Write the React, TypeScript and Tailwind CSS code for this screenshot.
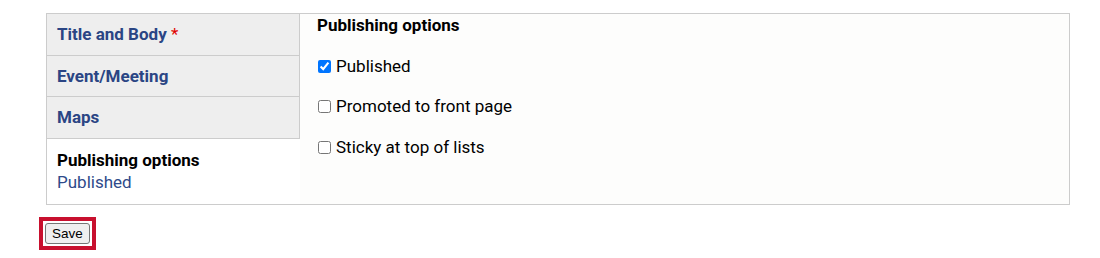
export default function App() {
  const tabs = [
    { label: "Title and Body", required: true },
    { label: "Event/Meeting" },
    { label: "Maps" },
  ];
  const options = [
    { label: "Published", checked: true },
    { label: "Promoted to front page", checked: false },
    { label: "Sticky at top of lists", checked: false },
  ];

  return (
    <div className="bg-white min-h-[258px] pt-[13px] pl-[46px] pr-[30px] font-['Roboto','Liberation_Sans',sans-serif] text-black">
      <div className="flex border border-[#cccccc] w-[1024px] h-[192px]">
        <ul className="w-[253px] shrink-0 flex flex-col">
          {tabs.map((t) => (
            <li
              key={t.label}
              className="bg-[#eeeeee] border-b border-r border-[#cccccc] px-[10px] py-[10px] h-[41.5px] flex items-center"
            >
              <a className="text-[17px] font-bold leading-[20px] text-[#2a4584]">
                {t.label}
                {t.required && <span className="text-[#e00000] font-normal"> *</span>}
              </a>
            </li>
          ))}
          <li className="bg-white px-[10px] pt-[10px] flex-1">
            <div className="text-[17px] font-bold leading-[22px]">Publishing options</div>
            <div className="text-[17px] leading-[22px] text-[#2e4a8a]">Published</div>
          </li>
        </ul>
        <div className="flex-1 bg-[#fdfdfc] pl-[17px] pt-[1px]">
          <h3 className="text-[17px] font-bold leading-[20px] mb-[11px]">Publishing options</h3>
          {options.map((o) => (
            <label key={o.label} className="flex items-center h-[40.5px] text-[17px]">
              <input
                type="checkbox"
                defaultChecked={o.checked}
                className="m-0 ml-[1px] mr-[5px] w-[13px] h-[13px]"
              />
              {o.label}
            </label>
          ))}
        </div>
      </div>
      <div className="mt-[12px] -ml-[7px]">
        <span className="inline-flex border-4 border-[#c8102e] p-[2px] bg-white">
          <button className="border border-[#767676] bg-[#efefef] rounded-[3px] px-[6px] py-[1px] h-[21px] text-[13.5px] leading-[17px] font-['Liberation_Sans',Arial,sans-serif] text-black">
            Save
          </button>
        </span>
      </div>
    </div>
  );
}
